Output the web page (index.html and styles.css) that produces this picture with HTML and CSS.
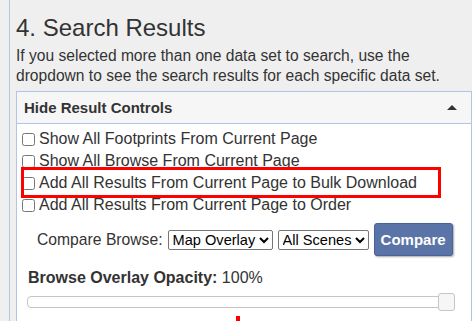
FILE: index.html
```html
<!DOCTYPE html>
<html lang="en">
<head>
  <meta charset="UTF-8">
  <title>Search Results</title>
  <link rel="stylesheet" href="styles.css">
</head>
<body>
  <div class="results">
    <h1>4. Search Results</h1>
    <p class="intro">If you selected more than one data set to search, use the dropdown to see the search results for each specific data set.</p>

    <div class="panel">
      <div class="panel-head">
        <span>Hide Result Controls</span>
        <span class="caret"></span>
      </div>
      <div class="panel-body">
        <label class="check"><input type="checkbox"> Show All Footprints From Current Page</label>
        <label class="check"><input type="checkbox"> Show All Browse From Current Page</label>
        <label class="check highlight"><input type="checkbox"> Add All Results From Current Page to Bulk Download</label>
        <label class="check"><input type="checkbox"> Add All Results From Current Page to Order</label>

        <div class="compare-row">
          <span>Compare Browse:</span>
          <select><option>Map Overlay</option></select>
          <select><option>All Scenes</option></select>
          <button type="button">Compare</button>
        </div>

        <div class="opacity">
          <b>Browse Overlay Opacity:</b> 100%
        </div>
        <div class="slider"><div class="handle"></div></div>
        <div class="marker"></div>
      </div>
    </div>
  </div>
</body>
</html>
```

FILE: styles.css
```css
* {
  margin: 0;
  padding: 0;
  box-sizing: border-box;
}

body {
  font-family: 'Liberation Sans', Arial, sans-serif;
  background-color: #efefef;
  color: #333;
  overflow: hidden;
}

.results {
  margin-left: 9px;
  border-left: 1px solid #b3c5e6;
  padding: 14px 0 0 6px;
  min-height: 321px;
}

h1 {
  font-weight: normal;
  font-size: 24px;
  line-height: 28px;
  margin-bottom: 4px;
}

.intro {
  font-size: 15.6px;
  line-height: 20px;
  margin-bottom: 5px;
}

.panel {
  border: 1px solid #b3c5e6;
  background: #fff;
}

.panel-head {
  display: flex;
  justify-content: space-between;
  align-items: center;
  height: 32px;
  padding: 0 14px 0 7px;
  background: #f6f6f6;
  border-bottom: 1px solid #b3c5e6;
  font-weight: bold;
  font-size: 15px;
}

.caret {
  width: 0;
  height: 0;
  border-left: 5px solid transparent;
  border-right: 5px solid transparent;
  border-bottom: 5px solid #333;
}

.panel-body {
  padding: 4px 0 0 5px;
}

.check {
  display: flex;
  align-items: center;
  gap: 4px;
  font-size: 16px;
  line-height: 22px;
  height: 22px;
}

.check input {
  width: 13px;
  height: 13px;
  margin: 0;
}

.highlight {
  position: relative;
}

.highlight::after {
  content: "";
  position: absolute;
  left: -1px;
  right: 30px;
  top: -5px;
  bottom: -4px;
  border: 3px solid #f00;
}

.compare-row {
  display: flex;
  align-items: center;
  gap: 5px;
  margin: 7px 0 0 15px;
  font-size: 15.7px;
}

.compare-row select {
  font-family: inherit;
  font-size: 14.6px;
  height: 20px;
  border: 1px solid #767676;
  border-radius: 2px;
  background: #fff;
  color: #000;
}

.compare-row button {
  font-family: inherit;
  font-weight: bold;
  font-size: 15px;
  color: #fff;
  background: #5b74a8;
  border: 1px solid #4a6296;
  border-radius: 3px;
  padding: 0 6px;
  height: 33px;
  box-shadow: 1px 1px 2px rgba(0, 0, 0, 0.35);
}

.opacity {
  margin: 13px 0 0 6px;
  font-size: 16px;
}

.slider {
  position: relative;
  margin: 9px 16px 0 5px;
  height: 12px;
  border: 1px solid #c5c5c5;
  border-radius: 4px;
  background: #fff;
}

.handle {
  position: absolute;
  right: -1px;
  top: -4px;
  width: 17px;
  height: 18px;
  border: 1px solid #c5c5c5;
  border-radius: 3px;
  background: #f6f6f6;
}

.marker {
  margin: 8px 0 0 214px;
  width: 4px;
  height: 6px;
  background: #f00;
}
```
